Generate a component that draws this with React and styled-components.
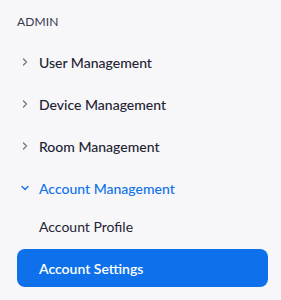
import React from 'react';
import styled, { createGlobalStyle } from 'styled-components';

const GlobalStyle = createGlobalStyle`
  body {
    margin: 0;
    background: #f7f7fa;
    font-family: Lato, "Noto Sans", sans-serif;
  }
`;

const Nav = styled.nav`
  width: 281px;
  height: 300px;
  padding: 0 13px 0 17px;
  box-sizing: border-box;
  display: flex;
  flex-direction: column;
`;

const Heading = styled.div`
  height: 41px;
  padding-top: 16px;
  box-sizing: border-box;
  font-size: 12px;
  line-height: 12px;
  color: #39394d;
  letter-spacing: 0.1px;
`;

const Row = styled.div`
  height: 42px;
  display: flex;
  align-items: center;
  gap: 10px;
  padding-left: 4px;
  font-size: 14px;
  font-weight: 500;
  color: ${(p) => (p.$open ? '#0e71eb' : '#232333')};
  cursor: pointer;
`;

const SubList = styled.div`
  display: flex;
  flex-direction: column;
  gap: 4px;
  margin-top: -2px;
`;

const SubItem = styled.div`
  height: 38px;
  display: flex;
  align-items: center;
  padding-left: 22px;
  border-radius: 8px;
  font-size: 14px;
  font-weight: ${(p) => (p.$active ? 600 : 400)};
  color: ${(p) => (p.$active ? '#ffffff' : '#232333')};
  background: ${(p) => (p.$active ? '#0e71eb' : 'transparent')};
  cursor: pointer;
`;

const Chevron = ({ open }) => (
  <svg width="8" height="10" viewBox="0 0 8 10" fill="none">
    {open ? (
      <path d="M1 3.5 L4 6.5 L7 3.5" stroke="#0e71eb" strokeWidth="1.3" strokeLinecap="round" strokeLinejoin="round" />
    ) : (
      <path d="M2.5 2 L5.5 5 L2.5 8" stroke="#747487" strokeWidth="1.3" strokeLinecap="round" strokeLinejoin="round" />
    )}
  </svg>
);

const sections = [
  { label: 'User Management' },
  { label: 'Device Management' },
  { label: 'Room Management' },
  { label: 'Account Management', open: true, children: ['Account Profile', 'Account Settings'] },
];

export default function App() {
  return (
    <>
      <GlobalStyle />
      <Nav>
        <Heading>ADMIN</Heading>
        {sections.map((s) => (
          <React.Fragment key={s.label}>
            <Row $open={s.open}>
              <Chevron open={s.open} />
              {s.label}
            </Row>
            {s.open && (
              <SubList>
                {s.children.map((c) => (
                  <SubItem key={c} $active={c === 'Account Settings'}>{c}</SubItem>
                ))}
              </SubList>
            )}
          </React.Fragment>
        ))}
      </Nav>
    </>
  );
}
